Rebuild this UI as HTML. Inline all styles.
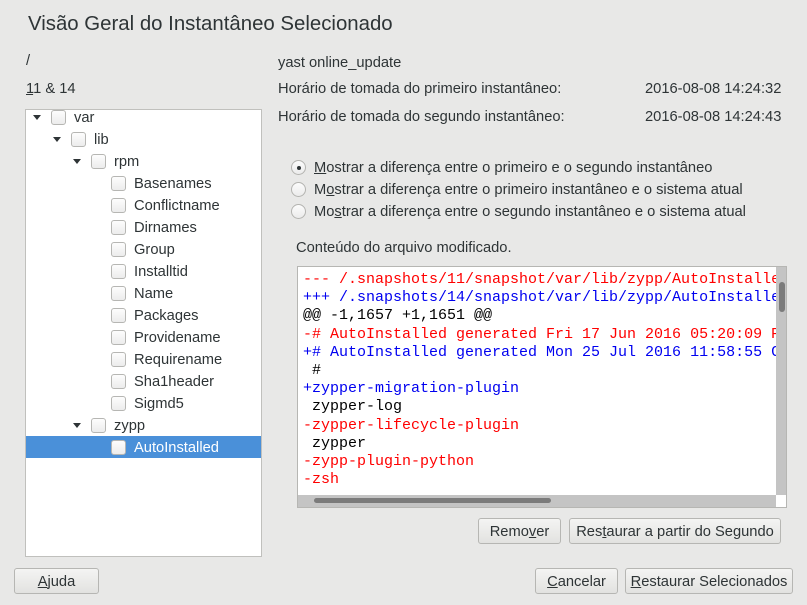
<!DOCTYPE html>
<html><head><meta charset="utf-8"><style>
*{box-sizing:border-box;margin:0;padding:0}
body{width:807px;height:605px;background:#e8e8e7;font-family:"Liberation Sans","DejaVu Sans",sans-serif;font-size:14.7px;color:#2e3436;position:relative;overflow:hidden}
.a{position:absolute;white-space:nowrap;margin-top:1px}
.tree{position:absolute;left:25px;top:109px;width:237px;height:448px;background:#fff;border:1px solid #c0c0bd;overflow:hidden}
.row{position:absolute;height:22px;line-height:22px;left:0;width:235px}
.cb{position:absolute;top:4px;width:15px;height:15px;border:1px solid #b6b6b3;border-radius:3px;background:linear-gradient(#fdfdfd,#ececec)}
.ar{position:absolute;top:9px;width:0;height:0;border-left:4.5px solid transparent;border-right:4.5px solid transparent;border-top:5px solid #2e3436}
.lb{position:absolute;top:1px}
.sel{background:#4a90d9;color:#fff}
.btn{position:absolute;height:26px;line-height:26px;text-align:center;border:1px solid #b6b6b3;border-radius:3px;background:linear-gradient(#f4f4f3,#e2e2e0)}
.rd{position:absolute;width:15px;height:15px;border:1px solid #b3b3b0;border-radius:50%;background:linear-gradient(#fcfcfc,#ebebeb)}
.code{position:absolute;left:297px;top:266px;width:490px;height:242px;background:#fff;border:1px solid #b6b6b3;overflow:hidden}
.code pre{font-family:"Liberation Mono",monospace;font-size:15px;line-height:18.2px;position:absolute;left:5px;top:4px;color:#000}
.r{color:#f00}.b{color:#0000f0}
u{text-decoration:underline}
</style></head><body>
<div class="a" style="left:28px;top:12px;font-size:20.4px;color:#2e3436">Visão Geral do Instantâneo Selecionado</div>
<div class="a" style="left:26px;top:52px">/</div>
<div class="a" style="left:26px;top:80px"><u>1</u>1 &amp; 14</div>
<div class="a" style="left:278px;top:54px">yast online_update</div>
<div class="a" style="left:278px;top:80px">Horário de tomada do primeiro instantâneo:</div>
<div class="a" style="left:645px;top:80px">2016-08-08 14:24:32</div>
<div class="a" style="left:278px;top:108px">Horário de tomada do segundo instantâneo:</div>
<div class="a" style="left:645px;top:108px">2016-08-08 14:24:43</div>

<div class="tree">
<div class="row" style="top:-4px"><div class="ar" style="left:7px"></div><div class="cb" style="left:25px"></div><div class="lb" style="left:48px">var</div></div>
<div class="row" style="top:18px"><div class="ar" style="left:27px"></div><div class="cb" style="left:45px"></div><div class="lb" style="left:68px">lib</div></div>
<div class="row" style="top:40px"><div class="ar" style="left:47px"></div><div class="cb" style="left:65px"></div><div class="lb" style="left:88px">rpm</div></div>
<div class="row" style="top:62px"><div class="cb" style="left:85px"></div><div class="lb" style="left:108px">Basenames</div></div>
<div class="row" style="top:84px"><div class="cb" style="left:85px"></div><div class="lb" style="left:108px">Conflictname</div></div>
<div class="row" style="top:106px"><div class="cb" style="left:85px"></div><div class="lb" style="left:108px">Dirnames</div></div>
<div class="row" style="top:128px"><div class="cb" style="left:85px"></div><div class="lb" style="left:108px">Group</div></div>
<div class="row" style="top:150px"><div class="cb" style="left:85px"></div><div class="lb" style="left:108px">Installtid</div></div>
<div class="row" style="top:172px"><div class="cb" style="left:85px"></div><div class="lb" style="left:108px">Name</div></div>
<div class="row" style="top:194px"><div class="cb" style="left:85px"></div><div class="lb" style="left:108px">Packages</div></div>
<div class="row" style="top:216px"><div class="cb" style="left:85px"></div><div class="lb" style="left:108px">Providename</div></div>
<div class="row" style="top:238px"><div class="cb" style="left:85px"></div><div class="lb" style="left:108px">Requirename</div></div>
<div class="row" style="top:260px"><div class="cb" style="left:85px"></div><div class="lb" style="left:108px">Sha1header</div></div>
<div class="row" style="top:282px"><div class="cb" style="left:85px"></div><div class="lb" style="left:108px">Sigmd5</div></div>
<div class="row" style="top:304px"><div class="ar" style="left:47px"></div><div class="cb" style="left:65px"></div><div class="lb" style="left:88px">zypp</div></div>
<div class="row sel" style="top:326px"><div class="cb" style="left:85px"></div><div class="lb" style="left:108px">AutoInstalled</div></div>
</div>

<div class="rd" style="left:291px;top:160px"><div style="position:absolute;left:4.5px;top:4.5px;width:4px;height:4px;border-radius:50%;background:#2e3436"></div></div>
<div class="a" style="left:314px;top:159px"><u>M</u>ostrar a diferença entre o primeiro e o segundo instantâneo</div>
<div class="rd" style="left:291px;top:182px"></div>
<div class="a" style="left:314px;top:181px">M<u>o</u>strar a diferença entre o primeiro instantâneo e o sistema atual</div>
<div class="rd" style="left:291px;top:204px"></div>
<div class="a" style="left:314px;top:203px">Mo<u>s</u>trar a diferença entre o segundo instantâneo e o sistema atual</div>
<div class="a" style="left:296px;top:239px">Conteúdo do arquivo modificado.</div>

<div class="code"><pre><span class="r">--- /.snapshots/11/snapshot/var/lib/zypp/AutoInstalled</span>
<span class="b">+++ /.snapshots/14/snapshot/var/lib/zypp/AutoInstalled</span>
@@ -1,1657 +1,1651 @@
<span class="r">-# AutoInstalled generated Fri 17 Jun 2016 05:20:09 PM</span>
<span class="b">+# AutoInstalled generated Mon 25 Jul 2016 11:58:55 CE</span>
 #
<span class="b">+zypper-migration-plugin</span>
 zypper-log
<span class="r">-zypper-lifecycle-plugin</span>
 zypper
<span class="r">-zypp-plugin-python</span>
<span class="r">-zsh</span>
<span class="r">-</span></pre>
<div style="position:absolute;left:478px;top:0;width:11px;height:228px;background:#c4c4c4"><div style="position:absolute;left:3px;top:15px;width:6px;height:30px;border-radius:3px;background:#7b7b7b"></div></div>
<div style="position:absolute;left:0;top:228px;width:478px;height:12px;background:#c4c4c4"><div style="position:absolute;left:16px;top:3px;width:237px;height:5px;border-radius:3px;background:#7b7b7b"></div></div>
</div>

<div class="btn" style="left:478px;top:518px;width:83px">Remo<u>v</u>er</div>
<div class="btn" style="left:569px;top:518px;width:212px">Res<u>t</u>aurar a partir do Segundo</div>
<div class="btn" style="left:14px;top:568px;width:85px"><u>A</u>juda</div>
<div class="btn" style="left:535px;top:568px;width:83px"><u>C</u>ancelar</div>
<div class="btn" style="left:625px;top:568px;width:168px"><u>R</u>estaurar Selecionados</div>
</body></html>
